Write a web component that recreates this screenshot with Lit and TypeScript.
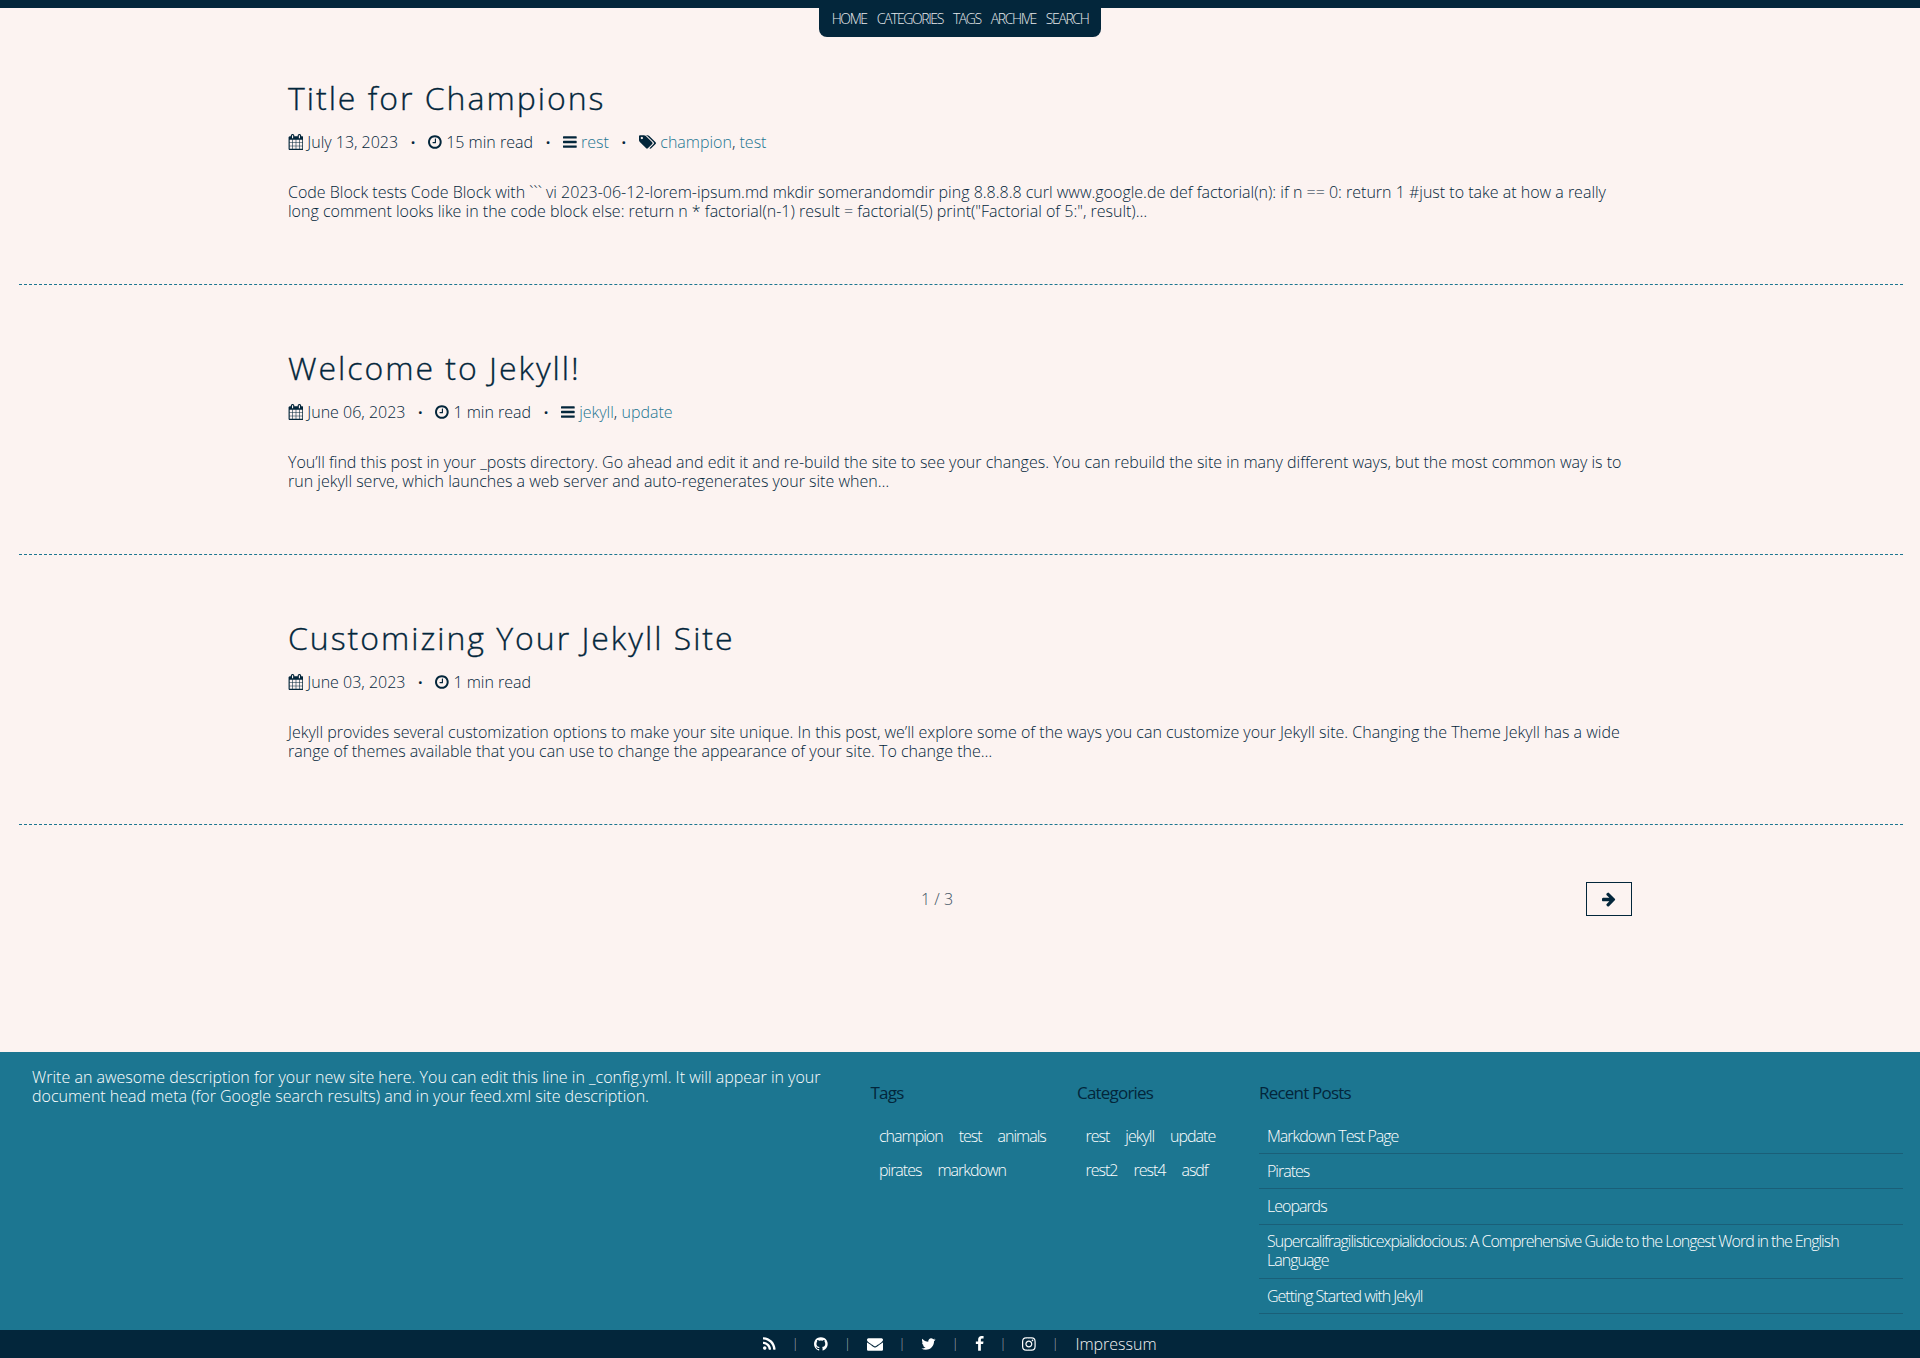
import { LitElement, html, css, svg } from "lit";
import { customElement } from "lit/decorators.js";

const ICONS: Record<string, [number, string]> = {
  calendar: [1664, "M192 1664h288v-288h-288v288zm352 0h320v-288h-320v288zm-352-352h288v-320h-288v320zm352 0h320v-320h-320v320zm-352-384h288v-288h-288v288zm736 736h320v-288h-320v288zm-384-736h320v-288h-320v288zm768 736h288v-288h-288v288zm-384-352h320v-320h-320v320zm-352-864v-288q0-13-9.5-22.5t-22.5-9.5h-64q-13 0-22.5 9.5t-9.5 22.5v288q0 13 9.5 22.5t22.5 9.5h64q13 0 22.5-9.5t9.5-22.5zm736 864h288v-320h-288v320zm-384-384h320v-288h-320v288zm384 0h288v-288h-288v288zm32-480v-288q0-13-9.5-22.5t-22.5-9.5h-64q-13 0-22.5 9.5t-9.5 22.5v288q0 13 9.5 22.5t22.5 9.5h64q13 0 22.5-9.5t9.5-22.5zm384-64v1280q0 52-38 90t-90 38h-1408q-52 0-90-38t-38-90v-1280q0-52 38-90t90-38h128v-96q0-66 47-113t113-47h64q66 0 113 47t47 113v96h384v-96q0-66 47-113t113-47h64q66 0 113 47t47 113v96h128q52 0 90 38t38 90z"],
  clock: [1536, "M896 544v448q0 14-9 23t-23 9h-320q-14 0-23-9t-9-23v-64q0-14 9-23t23-9h224v-352q0-14 9-23t23-9h64q14 0 23 9t9 23zm416 352q0-148-73-273t-198-198-273-73-273 73-198 198-73 273 73 273 198 198 273 73 273-73 198-198 73-273zm224 0q0 209-103 385.5t-279.5 279.5-385.5 103-385.5-103-279.5-279.5-103-385.5 103-385.5 279.5-279.5 385.5-103 385.5 103 279.5 279.5 103 385.5z"],
  bars: [1536, "M1536 1344v128q0 26-19 45t-45 19h-1408q-26 0-45-19t-19-45v-128q0-26 19-45t45-19h1408q26 0 45 19t19 45zm0-512v128q0 26-19 45t-45 19h-1408q-26 0-45-19t-19-45v-128q0-26 19-45t45-19h1408q26 0 45 19t19 45zm0-512v128q0 26-19 45t-45 19h-1408q-26 0-45-19t-19-45v-128q0-26 19-45t45-19h1408q26 0 45 19t19 45z"],
  tags: [1920, "M448 448q0-53-37.5-90.5t-90.5-37.5-90.5 37.5-37.5 90.5 37.5 90.5 90.5 37.5 90.5-37.5 37.5-90.5zm1067 576q0 53-37 90l-491 492q-39 37-91 37-53 0-90-37l-715-716q-38-37-64.5-101t-26.5-117v-416q0-52 38-90t90-38h416q53 0 117 26.5t102 64.5l715 714q37 39 37 91zm384 0q0 53-37 90l-491 492q-39 37-91 37-36 0-59-14t-53-45l470-470q37-37 37-90 0-52-37-91l-715-714q-38-38-102-64.5t-117-26.5h224q53 0 117 26.5t102 64.5l715 714q37 39 37 91z"],
  arrow: [1536, "M1472 960q0 54-37 90l-651 651q-39 37-91 37-51 0-90-37l-75-75q-38-38-38-91t38-91l293-293h-704q-52 0-84.5-37.5t-32.5-90.5v-128q0-53 32.5-90.5t84.5-37.5h704l-293-294q-38-36-38-90t38-90l75-75q38-38 90-38 53 0 91 38l651 651q37 35 37 90z"],
  rss: [1408, "M384 1344q0 80-56 136t-136 56-136-56-56-136 56-136 136-56 136 56 56 136zm512 123q2 28-17 48-18 21-47 21h-135q-25 0-43-16.5t-20-41.5q-22-229-184.5-391.5t-391.5-184.5q-25-2-41.5-20t-16.5-43v-135q0-29 21-47 17-17 43-17h5q160 13 306 80.5t259 181.5q114 113 181.5 259t80.5 306zm512 2q2 27-18 47-18 20-46 20h-143q-26 0-44.5-17.5t-19.5-42.5q-12-215-101-408.5t-231.5-336-336-231.5-408.5-102q-25-1-42.5-19.5t-17.5-43.5v-143q0-28 20-46 18-18 44-18h3q262 13 501.5 120t425.5 294q187 186 294 425.5t120 501.5z"],
  github: [1536, "M768 128q209 0 385.5 103t279.5 279.5 103 385.5q0 251-146.5 451.5t-378.5 277.5q-27 5-40-7t-13-30q0-3 .5-76.5t.5-134.5q0-97-52-142 57-6 102.5-18t94-39 81-66.5 53-105 20.5-150.5q0-119-79-206 37-91-8-204-28-9-81 11t-92 44l-38 24q-93-26-192-26t-192 26q-16-11-42.5-27t-83.5-38.5-85-13.5q-45 113-8 204-79 87-79 206 0 85 20.5 150t52.5 105 80.5 67 94 39 102.5 18q-39 36-49 103-21 10-45 15t-57 5-65.5-21.5-55.5-62.5q-19-32-48.5-52t-49.5-24l-20-3q-21 0-29 4.5t-5 11.5 9 14 13 12l7 5q22 10 43.5 38t31.5 51l10 23q13 38 44 61.5t67 30 69.5 7 55.5-3.5l23-4q0 38 .5 88.5t.5 54.5q0 18-13 30t-40 7q-232-77-378.5-277.5t-146.5-451.5q0-209 103-385.5t279.5-279.5 385.5-103z"],
  envelope: [1792, "M1792 710v794q0 66-47 113t-113 47h-1472q-66 0-113-47t-47-113v-794q44 49 101 87 362 246 497 345 57 42 92.5 65.5t94.5 48 110 24.5h2q51 0 110-24.5t94.5-48 92.5-65.5q170-123 498-345 57-39 100-87zm0-294q0 79-49 151t-122 123q-376 261-468 325-10 7-42.5 30.5t-54 38-52 32.5-57.5 27-50 9h-2q-23 0-50-9t-57.5-27-52-32.5-54-38-42.5-30.5q-91-64-262-182.5t-205-142.5q-62-42-117-115.5t-55-136.5q0-78 41.5-130t118.5-52h1472q65 0 112.5 47t47.5 113z"],
  twitter: [1664, "M1620 408q-67 98-162 167 1 14 1 42 0 130-38 259.5t-115.5 248.5-184.5 210.5-258 146-323 54.5q-271 0-496-145 35 4 78 4 225 0 401-138-105-2-188-64.5t-114-159.5q33 5 61 5 43 0 85-11-112-23-185.5-111.5t-73.5-205.5v-4q68 38 146 41-66-44-105-115t-39-154q0-88 44-163 121 149 294.5 238.5t371.5 99.5q-8-38-8-74 0-134 94.5-228.5t228.5-94.5q140 0 236 102 109-21 200-76-35 108-138 170 89-10 178-49z"],
  facebook: [1024, "M959 12v264h-157q-86 0-116 36t-30 108v189h293l-39 296h-254v759h-306v-759h-255v-296h255v-218q0-186 104-288.5t277-102.5q147 0 228 12z"],
  instagram: [1536, "M1024 896q0-106-75-181t-181-75-181 75-75 181 75 181 181 75 181-75 75-181zm138 0q0 164-115 279t-279 115-279-115-115-279 115-279 279-115 279 115 115 279zm108-410q0 38-27 65t-65 27-65-27-27-65 27-65 65-27 65 27 27 65zm-502-220q-7 0-76.5-.5t-105.5 0-96.5 3-103 10-71.5 18.5q-50 20-88 58t-58 88q-11 29-18.5 71.5t-10 103-3 96.5 0 105.5.5 76.5-.5 76.5 0 105.5 3 96.5 10 103 18.5 71.5q20 50 58 88t88 58q29 11 71.5 18.5t103 10 96.5 3 105.5 0 76.5-.5 76.5.5 105.5 0 96.5-3 103-10 71.5-18.5q50-20 88-58t58-88q11-29 18.5-71.5t10-103 3-96.5 0-105.5-.5-76.5.5-76.5 0-105.5-3-96.5-10-103-18.5-71.5q-20-50-58-88t-88-58q-29-11-71.5-18.5t-103-10-96.5-3-105.5 0-76.5.5zm768 630q0 229-5 317-10 208-124 322t-322 124q-88 5-317 5t-317-5q-208-10-322-124t-124-322q-5-88-5-317t5-317q10-208 124-322t322-124q88-5 317-5t317 5q208 10 322 124t124 322q5 88 5 317z"],
};

const fa = (name: string) => {
  const [w, d] = ICONS[name];
  return html`<svg class="fa" viewBox="0 0 ${w} 1792" aria-hidden="true">${svg`<path fill="currentColor" d=${d}></path>`}</svg>`;
};

type Post = { title: string; date: string; read: string; cats: string[]; tags: string[]; excerpt: string };

const POSTS: Post[] = [
  { title: "Title for Champions", date: "July 13, 2023", read: "15 min read", cats: ["rest"], tags: ["champion", "test"],
    excerpt: "Code Block tests Code Block with ``` vi 2023-06-12-lorem-ipsum.md mkdir somerandomdir ping 8.8.8.8 curl www.google.de def factorial(n): if n == 0: return 1 #just to take at how a really long comment looks like in the code block else: return n * factorial(n-1) result = factorial(5) print(\"Factorial of 5:\", result)…" },
  { title: "Welcome to Jekyll!", date: "June 06, 2023", read: "1 min read", cats: ["jekyll", "update"], tags: [],
    excerpt: "You’ll find this post in your _posts directory. Go ahead and edit it and re-build the site to see your changes. You can rebuild the site in many different ways, but the most common way is to run jekyll serve, which launches a web server and auto-regenerates your site when…" },
  { title: "Customizing Your Jekyll Site", date: "June 03, 2023", read: "1 min read", cats: [], tags: [],
    excerpt: "Jekyll provides several customization options to make your site unique. In this post, we’ll explore some of the ways you can customize your Jekyll site. Changing the Theme Jekyll has a wide range of themes available that you can use to change the appearance of your site. To change the…" },
];

const links = (items: string[]) => items.map((t, i) => html`${i ? ", " : ""}<a href="#">${t}</a>`);

@customElement("app-root")
export class AppRoot extends LitElement {
  static styles = css`
    :host {
      display: block;
      background: #fcf3f1;
      font-family: "Open Sans", "Noto Sans", sans-serif;
      font-weight: 300;
      font-size: 16px;
      line-height: 19.2px;
      color: #03263b;
    }
    a { color: #1c7691; text-decoration: none; }
    .fa { height: 1em; width: auto; display: inline-block; vertical-align: -0.12em; }
    .topbar { height: 8px; background: #03263b; display: flex; justify-content: center; }
    nav {
      height: 37px;
      padding-top: 8px;
      box-sizing: border-box;
      width: 282px;
      background: #03263b;
      border-radius: 0 0 8px 8px;
      display: flex;
      justify-content: center;
      gap: 10px;
      position: relative;
      font-size: 14px;
      line-height: 21px;
      letter-spacing: -1.4px;
    }
    nav a { color: #e8ebed; }
    main { height: 1044px; }
    .post { height: 270px; box-sizing: border-box; border-bottom: 1px dashed #1c7691; margin: 0 17px 0 19px; padding: 0 270px 0 269px; }
    .post:first-child { height: 277px; padding-top: 68px; }
    .post:not(:first-child) { padding-top: 61px; }
    h2 { margin: 0; font-size: 32px; line-height: 44px; font-weight: 300; letter-spacing: 1.98px; -webkit-text-stroke: 0.35px #03263b; color: #03263b; }
    .meta { margin-top: 11px; height: 22px; line-height: 22px; display: flex; align-items: center; white-space: pre; }
    .meta .fa { margin-right: 4.4px; }
    .dot { font-weight: 700; padding: 0 12.7px; }
    .excerpt { margin: 30px 0 0; }
    .pager { margin: 0 288px; padding-top: 57px; display: flex; justify-content: space-between; align-items: center; }
    .pager span { opacity: .8; padding-top: 2px; }
    .next { width: 46px; height: 34px; box-sizing: border-box; border: 1px solid #03263b; display: flex; align-items: center; justify-content: center; color: #03263b; }
    .foot { height: 278px; background: #1c7691; display: grid; grid-template-columns: 838.5px 206.5px 182px 1fr; padding: 16px 17px 0 32px; box-sizing: border-box; color: #fff; }
    .desc { margin: 0; width: 806px; color: #fff; }
    h4 { margin: 13px 0 0; font-size: 17px; line-height: 24px; font-weight: 400; letter-spacing: -0.8px; color: #03263b; }
    .tagl { display: flex; flex-wrap: wrap; gap: 15px 16px; margin: 22px 0 0; padding: 0 8.5px; letter-spacing: -1px; line-height: 19.2px; }
    .foot a { color: #fff; }
    ul { list-style: none; margin: 14px 0 0; padding: 0; letter-spacing: -1px; }
    li { padding: 7.5px 8px; border-bottom: 1px solid #1a5f78; }
    .bar { height: 28px; background: #03263b; color: #fff; display: flex; justify-content: center; align-items: center; gap: 16px; }
    .bar .sep { color: #b0b9bf; font-size: 12px; }
    .bar a { color: #fff; display: flex; }
    .bar .imp { color: #f2f2f2; margin-left: 1px; padding-top: 2px; }
  `;

  render() {
    return html`
      <div class="topbar">
        <nav>
          ${["HOME", "CATEGORIES", "TAGS", "ARCHIVE", "SEARCH"].map((t) => html`<a href="#">${t}</a>`)}
        </nav>
      </div>
      <main>
        ${POSTS.map((p) => html`
          <article class="post">
            <h2>${p.title}</h2>
            <div class="meta">
              <span>${fa("calendar")}${p.date}</span>
              <span class="dot">·</span>
              <span>${fa("clock")}${p.read}</span>
              ${p.cats.length ? html`<span class="dot">·</span><span>${fa("bars")}${links(p.cats)}</span>` : ""}
              ${p.tags.length ? html`<span class="dot">·</span><span>${fa("tags")}${links(p.tags)}</span>` : ""}
            </div>
            <p class="excerpt">${p.excerpt}</p>
          </article>
        `)}
        <div class="pager">
          <i></i>
          <span>1 / 3</span>
          <a class="next" href="#">${fa("arrow")}</a>
        </div>
      </main>
      <footer>
        <div class="foot">
          <p class="desc">Write an awesome description for your new site here. You can edit this line in _config.yml. It will appear in your document head meta (for Google search results) and in your feed.xml site description.</p>
          <section>
            <h4>Tags</h4>
            <div class="tagl">${["champion", "test", "animals", "pirates", "markdown"].map((t) => html`<a href="#">${t}</a>`)}</div>
          </section>
          <section>
            <h4>Categories</h4>
            <div class="tagl">${["rest", "jekyll", "update", "rest2", "rest4", "asdf"].map((t) => html`<a href="#">${t}</a>`)}</div>
          </section>
          <section>
            <h4>Recent Posts</h4>
            <ul>
              ${["Markdown Test Page", "Pirates", "Leopards", "Supercalifragilisticexpialidocious: A Comprehensive Guide to the Longest Word in the English Language", "Getting Started with Jekyll"].map((t) => html`<li><a href="#">${t}</a></li>`)}
            </ul>
          </section>
        </div>
        <div class="bar">
          ${["rss", "github", "envelope", "twitter", "facebook", "instagram"].map((n) => html`<a href="#">${fa(n)}</a><span class="sep">|</span>`)}
          <a class="imp" href="#">Impressum</a>
        </div>
      </footer>
    `;
  }
}
